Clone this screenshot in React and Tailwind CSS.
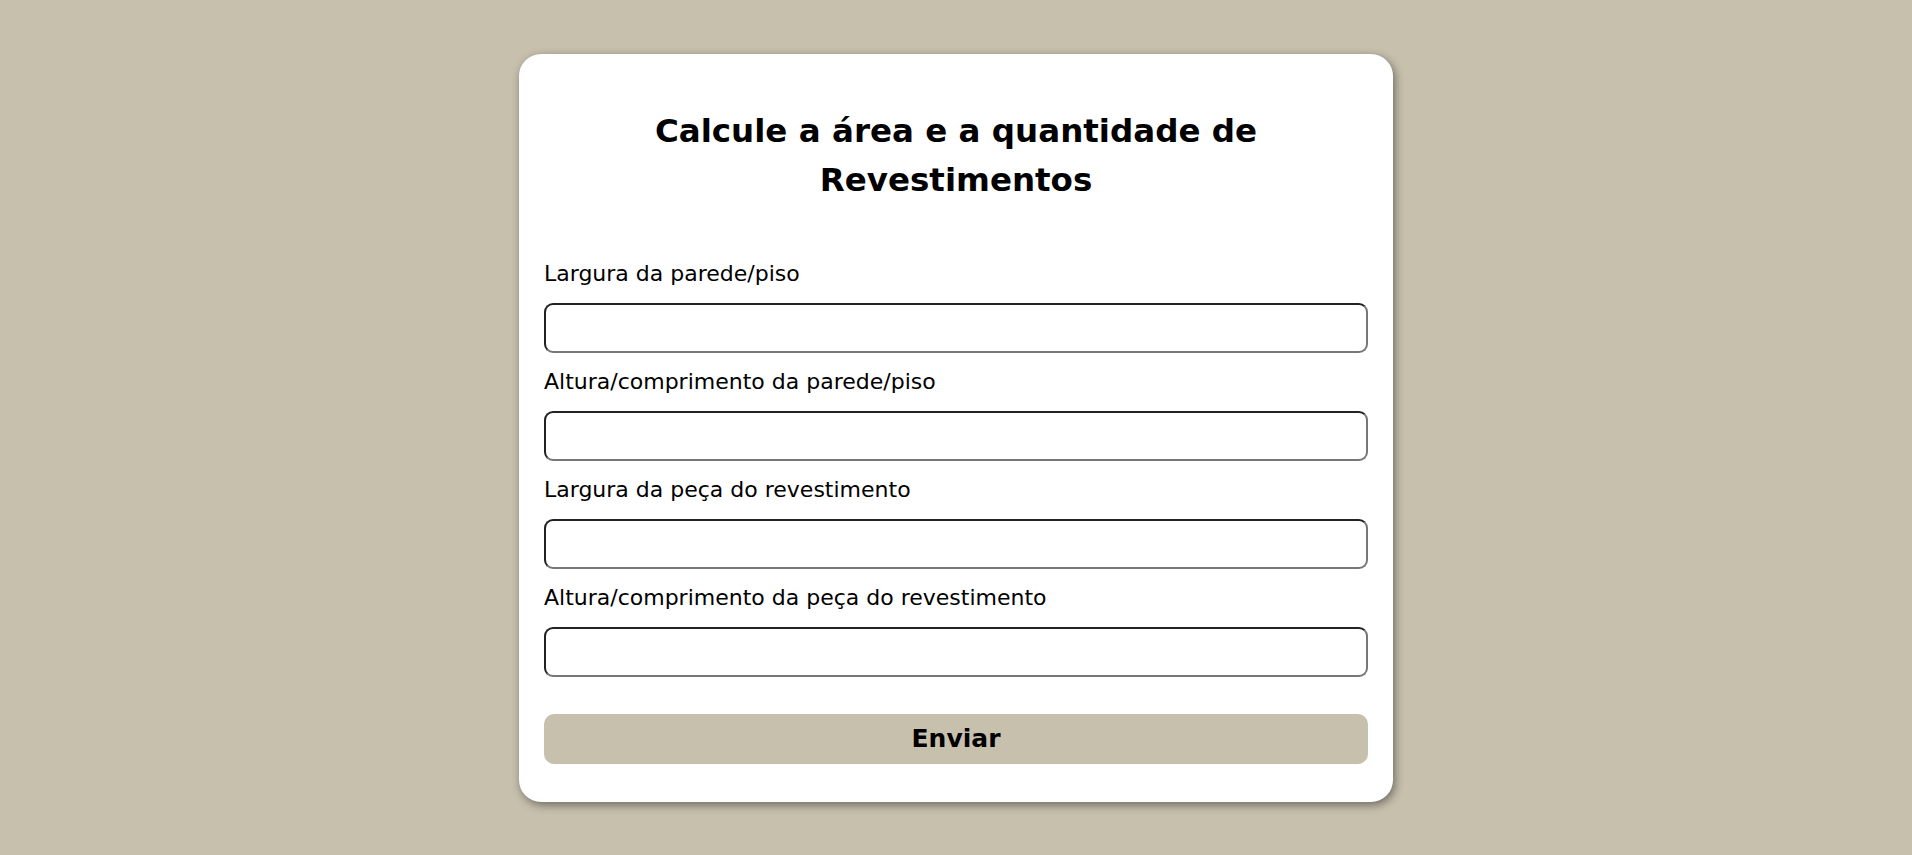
import { useState } from 'react';

const fields = [
  { id: 'larguraParede', label: 'Largura da parede/piso' },
  { id: 'alturaParede', label: 'Altura/comprimento da parede/piso' },
  { id: 'larguraPeca', label: 'Largura da peça do revestimento' },
  { id: 'alturaPeca', label: 'Altura/comprimento da peça do revestimento' },
];

export default function App() {
  const [values, setValues] = useState({});

  const handleChange = (id, value) => {
    setValues(prev => ({ ...prev, [id]: value }));
  };

  return (
    <div className="min-h-screen bg-[#c7c0ad] pt-[54px] font-['DejaVu_Sans',Verdana,sans-serif] text-black">
      <div className="mx-auto w-[874px] rounded-[22px] bg-white px-[25px] pt-[53px] pb-[38px] shadow-[2px_3px_10px_rgba(0,0,0,0.45)]">
        <h1 className="text-center text-[32.5px] font-bold leading-[49px]">
          Calcule a área e a quantidade de
          <br />
          Revestimentos
        </h1>
        <form className="mt-[56px] flex flex-col" onSubmit={e => e.preventDefault()}>
          {fields.map(field => (
            <div key={field.id} className="mb-[16px] flex flex-col">
              <label htmlFor={field.id} className="mb-[16px] text-[22px] leading-[26px]">
                {field.label}
              </label>
              <input
                id={field.id}
                type="number"
                value={values[field.id] || ''}
                onChange={e => handleChange(field.id, e.target.value)}
                className="h-[50px] rounded-[9px] border-2 border-t-[#222] border-l-[#222] border-b-[#777] border-r-[#777] bg-white px-2 text-[20px] outline-none"
              />
            </div>
          ))}
          <button
            type="submit"
            className="mt-[21px] h-[50px] rounded-[10px] bg-[#c7c0ad] text-[25px] font-bold"
          >
            Enviar
          </button>
        </form>
      </div>
    </div>
  );
}
